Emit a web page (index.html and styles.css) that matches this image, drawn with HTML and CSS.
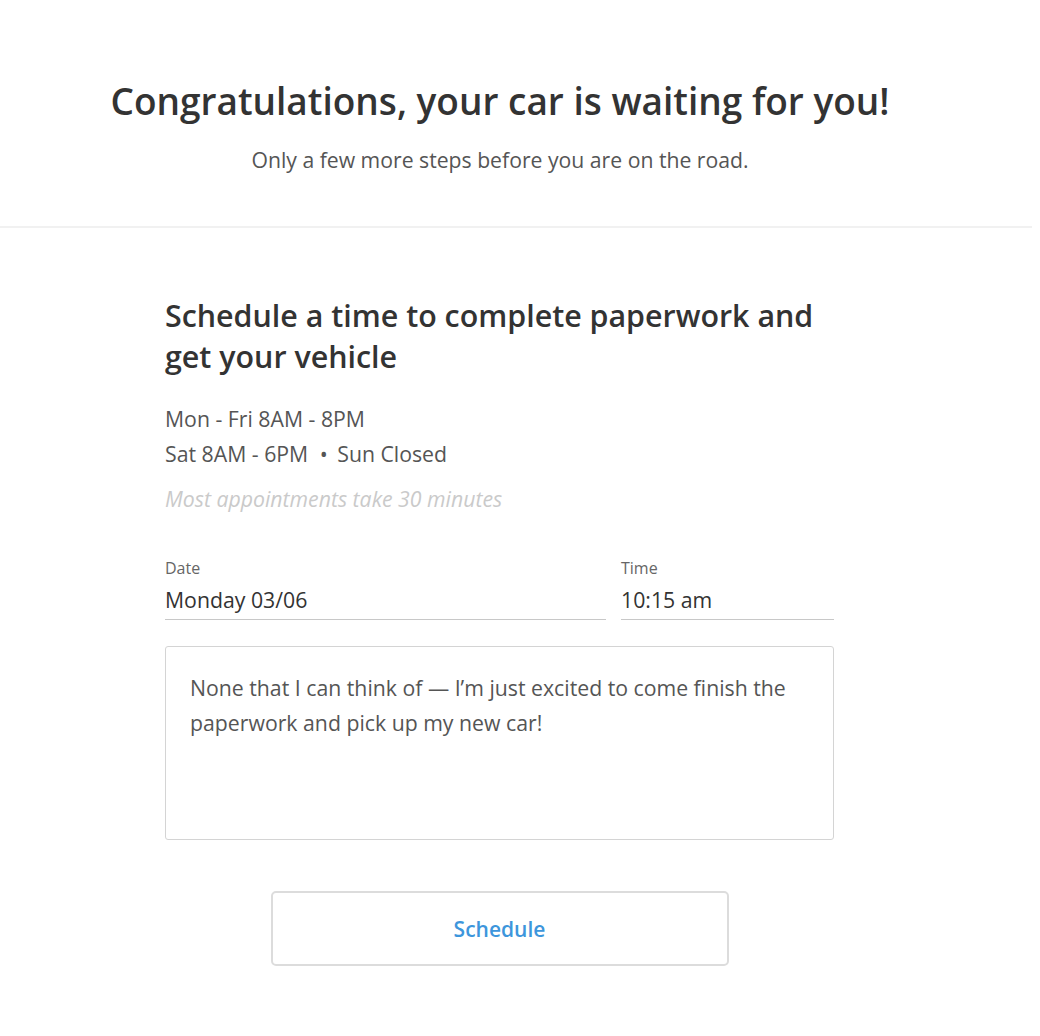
FILE: index.html
```html
<!DOCTYPE html>
<html lang="en">
<head>
    <meta charset="UTF-8">
    <meta name="viewport" content="width=device-width, initial-scale=1.0">
    <title>Schedule Pickup</title>
    <link rel="stylesheet" href="styles.css">
</head>
<body>
    <header class="hero">
        <h1>Congratulations, your car is waiting for you!</h1>
        <p class="hero-sub">Only a few more steps before you are on the road.</p>
    </header>
    <div class="divider"></div>
    <main class="schedule">
        <h2>Schedule a time to complete paperwork and get your vehicle</h2>
        <div class="hours">
            <p>Mon - Fri 8AM - 8PM</p>
            <p>Sat 8AM - 6PM <span class="dot">&bull;</span> Sun Closed</p>
        </div>
        <p class="note">Most appointments take 30 minutes</p>
        <div class="fields">
            <label class="field field-date">
                <span class="field-label">Date</span>
                <span class="field-value">Monday 03/06</span>
            </label>
            <label class="field field-time">
                <span class="field-label">Time</span>
                <span class="field-value">10:15 am</span>
            </label>
        </div>
        <div class="comments">None that I can think of &mdash; I&rsquo;m just excited to come finish the paperwork and pick up my new car!</div>
        <div class="actions">
            <button type="button" class="schedule-button">Schedule</button>
        </div>
    </main>
</body>
</html>
```

FILE: styles.css
```css
body {
    font-family: "Open Sans", Arial, sans-serif;
    margin: 0;
    background: #fff;
    color: #333;
}
.hero {
    width: 1000px;
    text-align: center;
    padding-top: 76px;
}
h1 {
    margin: 0;
    font-size: 37px;
    font-weight: 600;
    color: #333;
    line-height: 50px;
}
.hero-sub {
    margin: 20px 0 0;
    font-size: 21.2px;
    color: #555;
    line-height: 28px;
}
.divider {
    width: 1032px;
    height: 2px;
    background: #f1f1f1;
    margin-top: 52px;
}
.schedule {
    width: 669px;
    margin-left: 165px;
    padding-top: 67px;
}
h2 {
    margin: 0;
    font-size: 30.4px;
    font-weight: 600;
    color: #333;
    line-height: 41px;
    width: 660px;
}
.hours {
    margin-top: 24px;
}
.hours p {
    margin: 0;
    font-size: 21.25px;
    line-height: 35px;
    color: #555;
}
.dot {
    margin: 0 4px 0 6px;
}
.note {
    margin: 10px 0 0;
    font-size: 21.25px;
    font-style: italic;
    color: #cacaca;
    line-height: 35px;
}
.fields {
    display: flex;
    gap: 15px;
    margin-top: 41px;
}
.field {
    display: flex;
    flex-direction: column;
    border-bottom: 1px solid #c8c8c8;
    padding-bottom: 5px;
}
.field-date {
    width: 441px;
}
.field-time {
    flex: 1;
}
.field-label {
    font-size: 16px;
    color: #666;
    line-height: 22px;
}
.field-value {
    font-size: 21.25px;
    color: #333;
    line-height: 28px;
    margin-top: 7px;
}
.comments {
    margin-top: 26px;
    height: 194px;
    box-sizing: border-box;
    border: 1px solid #d4d4d4;
    border-radius: 3px;
    padding: 23px 24px 0 24px;
    font-size: 21.25px;
    line-height: 35px;
    color: #555;
}
.actions {
    display: flex;
    justify-content: center;
    margin-top: 51px;
}
.schedule-button {
    width: 458px;
    height: 75px;
    background: #fff;
    border: 2px solid #dcdcdc;
    border-radius: 5px;
    font-family: "Open Sans", Arial, sans-serif;
    font-size: 21px;
    font-weight: 600;
    color: #3d96dc;
    cursor: pointer;
}
```
